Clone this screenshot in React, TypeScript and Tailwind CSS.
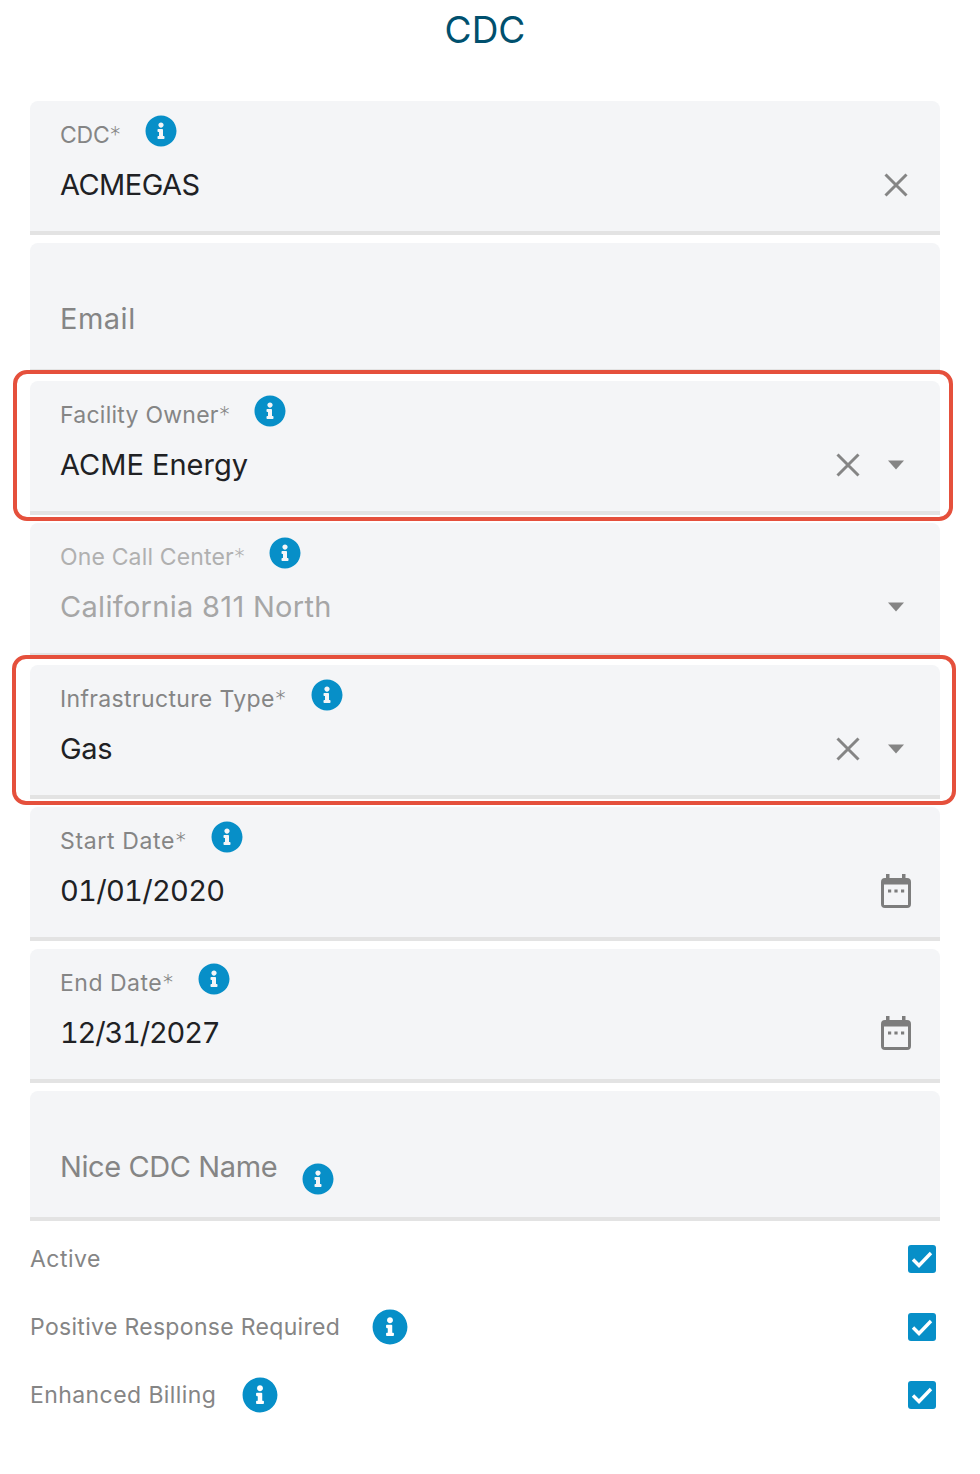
import { FaInfoCircle } from 'react-icons/fa';

const FONT = 'font-["Inter","Noto_Sans",sans-serif]';

function Info({ className = '', size = 32 }: { className?: string; size?: number }) {
  return <FaInfoCircle size={size} className={`shrink-0 text-[#078fc8] ${className}`} />;
}

function ClearIcon() {
  return (
    <svg width="26" height="26" viewBox="0 0 26 26">
      <path d="M2.5 2.5 L23.5 23.5 M23.5 2.5 L2.5 23.5" stroke="#858585" strokeWidth="3" fill="none" />
    </svg>
  );
}

function CaretIcon() {
  return (
    <svg width="18" height="10" viewBox="0 0 18 10">
      <path d="M1 0.5 H17 L9 9.5 Z" fill="#858585" />
    </svg>
  );
}

function CalendarIcon() {
  return (
    <svg width="30" height="34" viewBox="0 0 30 34">
      <path
        d="M5 0 h3.5 v4 h12.5 v-4 h3.5 v4 h1.5 a4 4 0 0 1 4 4 v22 a4 4 0 0 1 -4 4 h-22 a4 4 0 0 1 -4 -4 v-22 a4 4 0 0 1 4 -4 h1 Z M3 10.5 v20.5 h24 v-20.5 Z"
        fill="#7d7d7d"
        fillRule="evenodd"
      />
      <rect x="7" y="15.5" width="3.2" height="3" fill="#7d7d7d" />
      <rect x="13.4" y="15.5" width="3.2" height="3" fill="#7d7d7d" />
      <rect x="20" y="15.5" width="3.2" height="3" fill="#7d7d7d" />
    </svg>
  );
}

function CheckedBox() {
  return (
    <svg width="28" height="28" viewBox="0 0 28 28" className="shrink-0">
      <rect width="28" height="28" rx="3" fill="#078fc8" />
      <path d="M5 14.5 L11 20.5 L23 8" stroke="#fff" strokeWidth="3.4" fill="none" />
    </svg>
  );
}

// trailing controls sit in 48px slots so x, caret and calendar line up across rows
function Slot({ children }: { children: React.ReactNode }) {
  return <span className="flex w-[48px] shrink-0 justify-center">{children}</span>;
}

type FieldProps = {
  label: string;
  labelClass?: string;
  value: string;
  valueClass?: string;
  disabled?: boolean;
  clear?: boolean;
  caret?: boolean;
  calendar?: boolean;
};

function Field({ label, labelClass = 'tracking-[0.35px]', value, valueClass = '', disabled, clear, caret, calendar }: FieldProps) {
  return (
    <div className="h-[134px] rounded-t-lg border-b-4 border-[#e3e3e3] bg-[#f4f5f7] pl-[30px] pr-[20px] pt-[14px]">
      <div className="flex h-[32px] items-center">
        <span className={`mt-2 text-[23px] leading-[32px] ${labelClass} ${disabled ? 'text-[#b0b0b0]' : 'text-[#858585]'}`}>
          {label}
          <span className="font-extralight">*</span>
        </span>
        <Info className="ml-[24px]" />
      </div>
      <div className="mt-[18px] flex h-[40px] items-center">
        <span className={`flex-1 text-[29px] leading-[40px] ${valueClass} ${disabled ? 'text-[#a6a6a6]' : 'text-[#202124]'}`}>
          {value}
        </span>
        {clear && (
          <Slot>
            <ClearIcon />
          </Slot>
        )}
        {caret && (
          <Slot>
            <CaretIcon />
          </Slot>
        )}
        {calendar && (
          <Slot>
            <CalendarIcon />
          </Slot>
        )}
      </div>
    </div>
  );
}

function Placeholder({ label, labelClass = '', info }: { label: string; labelClass?: string; info?: boolean }) {
  return (
    <div className="flex h-[130px] items-start rounded-t-lg border-b-4 border-[#e3e3e3] bg-[#f4f5f7] pl-[30px] pt-[56px]">
      <span className={`text-[29px] leading-[40px] text-[#858585] ${labelClass}`}>{label}</span>
      {info && <Info className="ml-[25px] mt-[16px]" />}
    </div>
  );
}

function CheckRow({ label, labelClass = 'tracking-[0.35px]', infoGap, info }: { label: string; labelClass?: string; infoGap?: string; info?: boolean }) {
  return (
    <div className="flex h-[68px] items-center justify-between pr-[4px]">
      <div className="flex items-center">
        <span className={`text-[23px] text-[#858585] ${labelClass}`}>{label}</span>
        {info && <Info size={36} className={infoGap} />}
      </div>
      <CheckedBox />
    </div>
  );
}

export default function App() {
  return (
    <div className={`relative h-[1474px] w-[970px] bg-white px-[30px] ${FONT}`}>
      <h1 className="h-[101px] pt-[5px] text-center text-[37px] leading-[50px] text-[#00506e]">CDC</h1>

      <div className="flex flex-col gap-[8px]">
        <Field label="CDC" labelClass="tracking-[-0.2px]" value="ACMEGAS" valueClass="tracking-[-0.55px]" clear />
        <Placeholder label="Email" labelClass="tracking-[0.5px]" />
        <Field label="Facility Owner" labelClass="tracking-[0.25px]" value="ACME Energy" clear caret />
        <Field label="One Call Center" labelClass="tracking-[0.15px]" value="California 811 North" valueClass="tracking-[0.3px]" disabled caret />
        <Field label="Infrastructure Type" value="Gas" valueClass="tracking-[-0.3px]" clear caret />
        <Field label="Start Date" labelClass="tracking-[0.65px]" value="01/01/2020" valueClass="tabular-nums tracking-[-0.7px]" calendar />
        <Field label="End Date" labelClass="tracking-[0.5px]" value="12/31/2027" valueClass="tabular-nums tracking-[-1.2px]" calendar />
        <Placeholder label="Nice CDC Name" labelClass="tracking-[-0.4px]" info />
      </div>

      <div className="mt-[4px] flex flex-col">
        <CheckRow label="Active" labelClass="tracking-[0.5px]" />
        <CheckRow label="Positive Response Required" labelClass="tracking-[0.32px]" info infoGap="ml-[32px]" />
        <CheckRow label="Enhanced Billing" labelClass="tracking-[0.42px]" info infoGap="ml-[26px]" />
      </div>

      {/* red annotation boxes drawn over the form */}
      <div className="pointer-events-none absolute left-[13px] top-[370px] h-[151px] w-[940px] rounded-[14px] border-4 border-[#e5503c]" />
      <div className="pointer-events-none absolute left-[12px] top-[655px] h-[150px] w-[944px] rounded-[14px] border-4 border-[#e5503c]" />
    </div>
  );
}
